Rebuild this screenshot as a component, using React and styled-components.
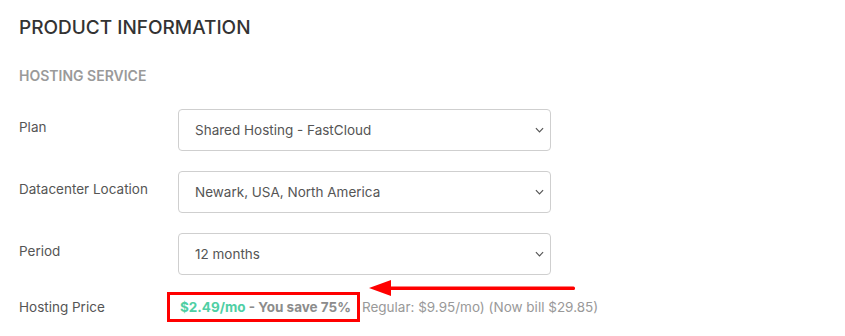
import styled, { createGlobalStyle } from 'styled-components';

const GlobalStyle = createGlobalStyle`
  body {
    margin: 0;
    background: #fff;
    font-family: Inter, "Noto Sans", sans-serif;
  }
`;

const rows = [
  { label: 'Plan', value: 'Shared Hosting - FastCloud' },
  { label: 'Datacenter Location', value: 'Newark, USA, North America' },
  { label: 'Period', value: '12 months' },
];

export default function App() {
  return (
    <>
      <GlobalStyle />
      <Section>
        <Title>Product Information</Title>
        <Subtitle>Hosting Service</Subtitle>
        <Form>
          {rows.map((row) => (
            <Row key={row.label}>
              <Label>{row.label}</Label>
              <Select>
                <span>{row.value}</span>
                <Chevron viewBox='0 0 10 6'>
                  <path d='M1 1l4 4 4-4' />
                </Chevron>
              </Select>
            </Row>
          ))}
          <PriceRow>
            <Label>Hosting Price</Label>
            <PriceLine>
              <Highlight>
                <Green>$2.49/mo</Green> - You save 75%
              </Highlight>
              <Regular>Regular: $9.95/mo) (Now bill $29.85)</Regular>
              <Arrow viewBox='0 0 206 16'>
                <path d='M0 8L22 0V16Z' />
                <rect x='20' y='6.5' width='186' height='3.5' rx='1.5' />
              </Arrow>
            </PriceLine>
          </PriceRow>
        </Form>
      </Section>
    </>
  );
}

const Section = styled.section`
  padding: 16px 19px;
  color: #333;
`;

const Title = styled.h2`
  margin: 0;
  font-size: 19px;
  font-weight: 500;
  line-height: 24px;
  text-transform: uppercase;
  color: #333;
`;

const Subtitle = styled.h3`
  margin: 28px 0 0;
  font-size: 14px;
  font-weight: 600;
  line-height: 16px;
  text-transform: uppercase;
  color: #9a9a9a;
`;

const Form = styled.div`
  display: grid;
  gap: 20px;
  margin-top: 25px;
`;

const Row = styled.div`
  display: grid;
  grid-template-columns: 159px 373px;
  align-items: start;
`;

const Label = styled.div`
  font-size: 13.5px;
  line-height: 18px;
  color: #555;
  padding-top: 9px;
`;

const Select = styled.div`
  height: 42px;
  box-sizing: border-box;
  border: 1px solid #cfcfcf;
  border-radius: 4px;
  display: flex;
  align-items: center;
  justify-content: space-between;
  padding: 0 6px 0 16px;
  font-size: 13.5px;
  color: #555;
`;

const Chevron = styled.svg`
  width: 9px;
  height: 6px;
  fill: none;
  stroke: #555;
  stroke-width: 1.3;
`;

const PriceRow = styled(Row)`
  grid-template-columns: 159px 1fr;
  margin-top: -3px;
  ${Label} {
    padding-top: 6px;
  }
`;

const PriceLine = styled.div`
  position: relative;
  display: flex;
  align-items: center;
  font-size: 13.5px;
`;

const Highlight = styled.span`
  margin-left: -11px;
  padding: 4px 6px 4px 10px;
  border: 3px solid #f00;
  font-weight: 700;
  color: #8c8c8c;
`;

const Green = styled.span`
  color: #4fcfa4;
`;

const Regular = styled.span`
  margin-left: 2px;
  color: #999;
`;

const Arrow = styled.svg`
  position: absolute;
  left: 191px;
  top: -12px;
  width: 206px;
  height: 16px;
  fill: #f00;
`;
